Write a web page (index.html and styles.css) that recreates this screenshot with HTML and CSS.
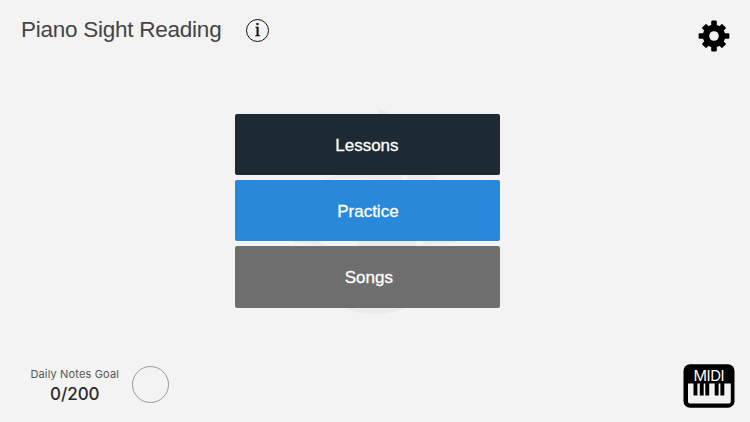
FILE: index.html
```
<!DOCTYPE html>
<html lang="en">
<head>
  <meta charset="UTF-8">
  <title>Piano Sight Reading</title>
  <link rel="stylesheet" href="styles.css">
</head>
<body>
  <header class="header">
    <h1 class="title">Piano Sight Reading</h1>
    <div class="info-icon">i</div>
    <svg class="settings" viewBox="-16 -16 32 32">
      <defs>
        <rect id="tooth" x="-2.8" y="-15.4" width="5.6" height="30.8" rx="1.2"/>
      </defs>
      <use href="#tooth"/>
      <use href="#tooth" transform="rotate(45) scale(1.1 .93)"/>
      <use href="#tooth" transform="rotate(90)"/>
      <use href="#tooth" transform="rotate(135) scale(1.1 .93)"/>
      <circle r="11.2"/>
      <circle class="gear-hole" r="4.8"/>
    </svg>
  </header>

  <main class="menu">
    <!-- faded logo behind the buttons -->
    <svg class="watermark" viewBox="0 0 170 206">
      <path d="M86 0 Q100 3 105 10 L86 10Z"/>
      <path d="M33 71 Q34 67 60 65 H110 V72 H95 Q60 67 33 71Z"/>
      <path d="M115 65 H140 Q146 69 147 72 H115Z"/>
      <path d="M2 132 H26 L36 138 Q20 134 2 134Z"/>
      <path d="M65 132 H124 V138 H65Z"/>
      <path d="M131 132 H164 V134 L131 136Z"/>
      <path d="M48 196 H119 Q105 205 83 205 Q62 205 48 196Z"/>
    </svg>
    <button class="btn lessons">Lessons</button>
    <button class="btn practice">Practice</button>
    <button class="btn songs">Songs</button>
  </main>

  <footer class="footer">
    <div class="goal">
      <div class="goal-label">Daily Notes Goal</div>
      <div class="goal-count">0/200</div>
    </div>
    <div class="goal-ring"></div>
    <svg class="midi" viewBox="0 0 52 44">
      <rect x=".5" y=".3" width="51" height="43.4" rx="6.5"/>
      <path class="keys" d="M5 19.6H47.8V37a2.6 2.6 0 0 1-2.6 2.6H7.6A2.6 2.6 0 0 1 5 37Z"/>
      <path d="M10.5 19h3.9v12.6h-3.9zM16.8 19h3.9v12.6h-3.9zM22.3 19h3.9v12.6h-3.9zM31.7 19h3.9v12.6h-3.9zM37.4 19h3.9v12.6h-3.9z"/>
      <text x="26" y="16.5" text-anchor="middle" textLength="31">MIDI</text>
    </svg>
  </footer>
</body>
</html>
```
FILE: styles.css
```
* {
  box-sizing: border-box;
}
body {
  margin: 0;
  height: 422px;
  overflow: hidden;
  display: flex;
  flex-direction: column;
  background: #f3f3f3;
  font-family: "Liberation Sans", Arial, sans-serif;
}

.header {
  display: flex;
  align-items: flex-start;
  height: 114px;
  padding: 16px 20px 0 21px;
}
.title {
  margin: 0;
  width: 201px;
  color: #444;
  font-size: 22.5px;
  font-weight: normal;
  line-height: 27px;
  letter-spacing: -0.25px;
  white-space: nowrap;
}
.info-icon {
  width: 23px;
  height: 23px;
  margin: 3px 0 0 24px;
  border: 1.4px solid #111;
  border-radius: 50%;
  color: #000;
  font: 18px/20px "Liberation Serif", serif;
  -webkit-text-stroke: 0.4px #000;
  text-align: center;
}
.settings {
  width: 32px;
  height: 32px;
  margin: 4px 0 0 auto;
}
.gear-hole {
  fill: #f3f3f3;
}

.menu {
  position: relative;
  display: flex;
  flex-direction: column;
  gap: 5px;
  width: 265px;
  margin-left: 235.4px;
}
.watermark {
  position: absolute;
  left: 57px;
  top: -5px;
  width: 170px;
  height: 206px;
  fill: #ebebeb;
}
.btn {
  position: relative;
  height: 61.2px;
  padding: 2px 0 0;
  border: none;
  border-radius: 2px;
  color: #fff;
  font-family: inherit;
  font-size: 17px;
  -webkit-text-stroke: 0.3px #fff;
}
.lessons {
  padding-right: 2px;
  background: #1e2a33;
}
.practice {
  background: #2a88db;
}
.songs {
  padding-left: 2px;
  background: #6e6e6e;
}

.footer {
  display: flex;
  align-items: flex-start;
  margin-top: auto;
  height: 72px;
  padding: 0 15px 0 12px;
}
.goal {
  width: 119.5px;
  padding-top: 17px;
  padding-left: 6px;
  text-align: center;
  font-family: Inter, sans-serif;
}
.goal-label {
  color: #555;
  font-size: 11px;
  line-height: 15px;
  letter-spacing: 0.15px;
  white-space: nowrap;
}
.goal-count {
  color: #2b2b2b;
  font-size: 17px;
  font-weight: 500;
  line-height: 24px;
}
.goal-ring {
  width: 37px;
  height: 37px;
  margin-top: 16px;
  border: 1px solid #999;
  border-radius: 50%;
}
.midi {
  width: 52px;
  height: 44px;
  margin: 14px 0 0 auto;
}
.midi .keys {
  fill: #f3f3f3;
}
.midi text {
  fill: #fff;
  font-family: Inter, sans-serif;
  font-size: 15px;
}
```
